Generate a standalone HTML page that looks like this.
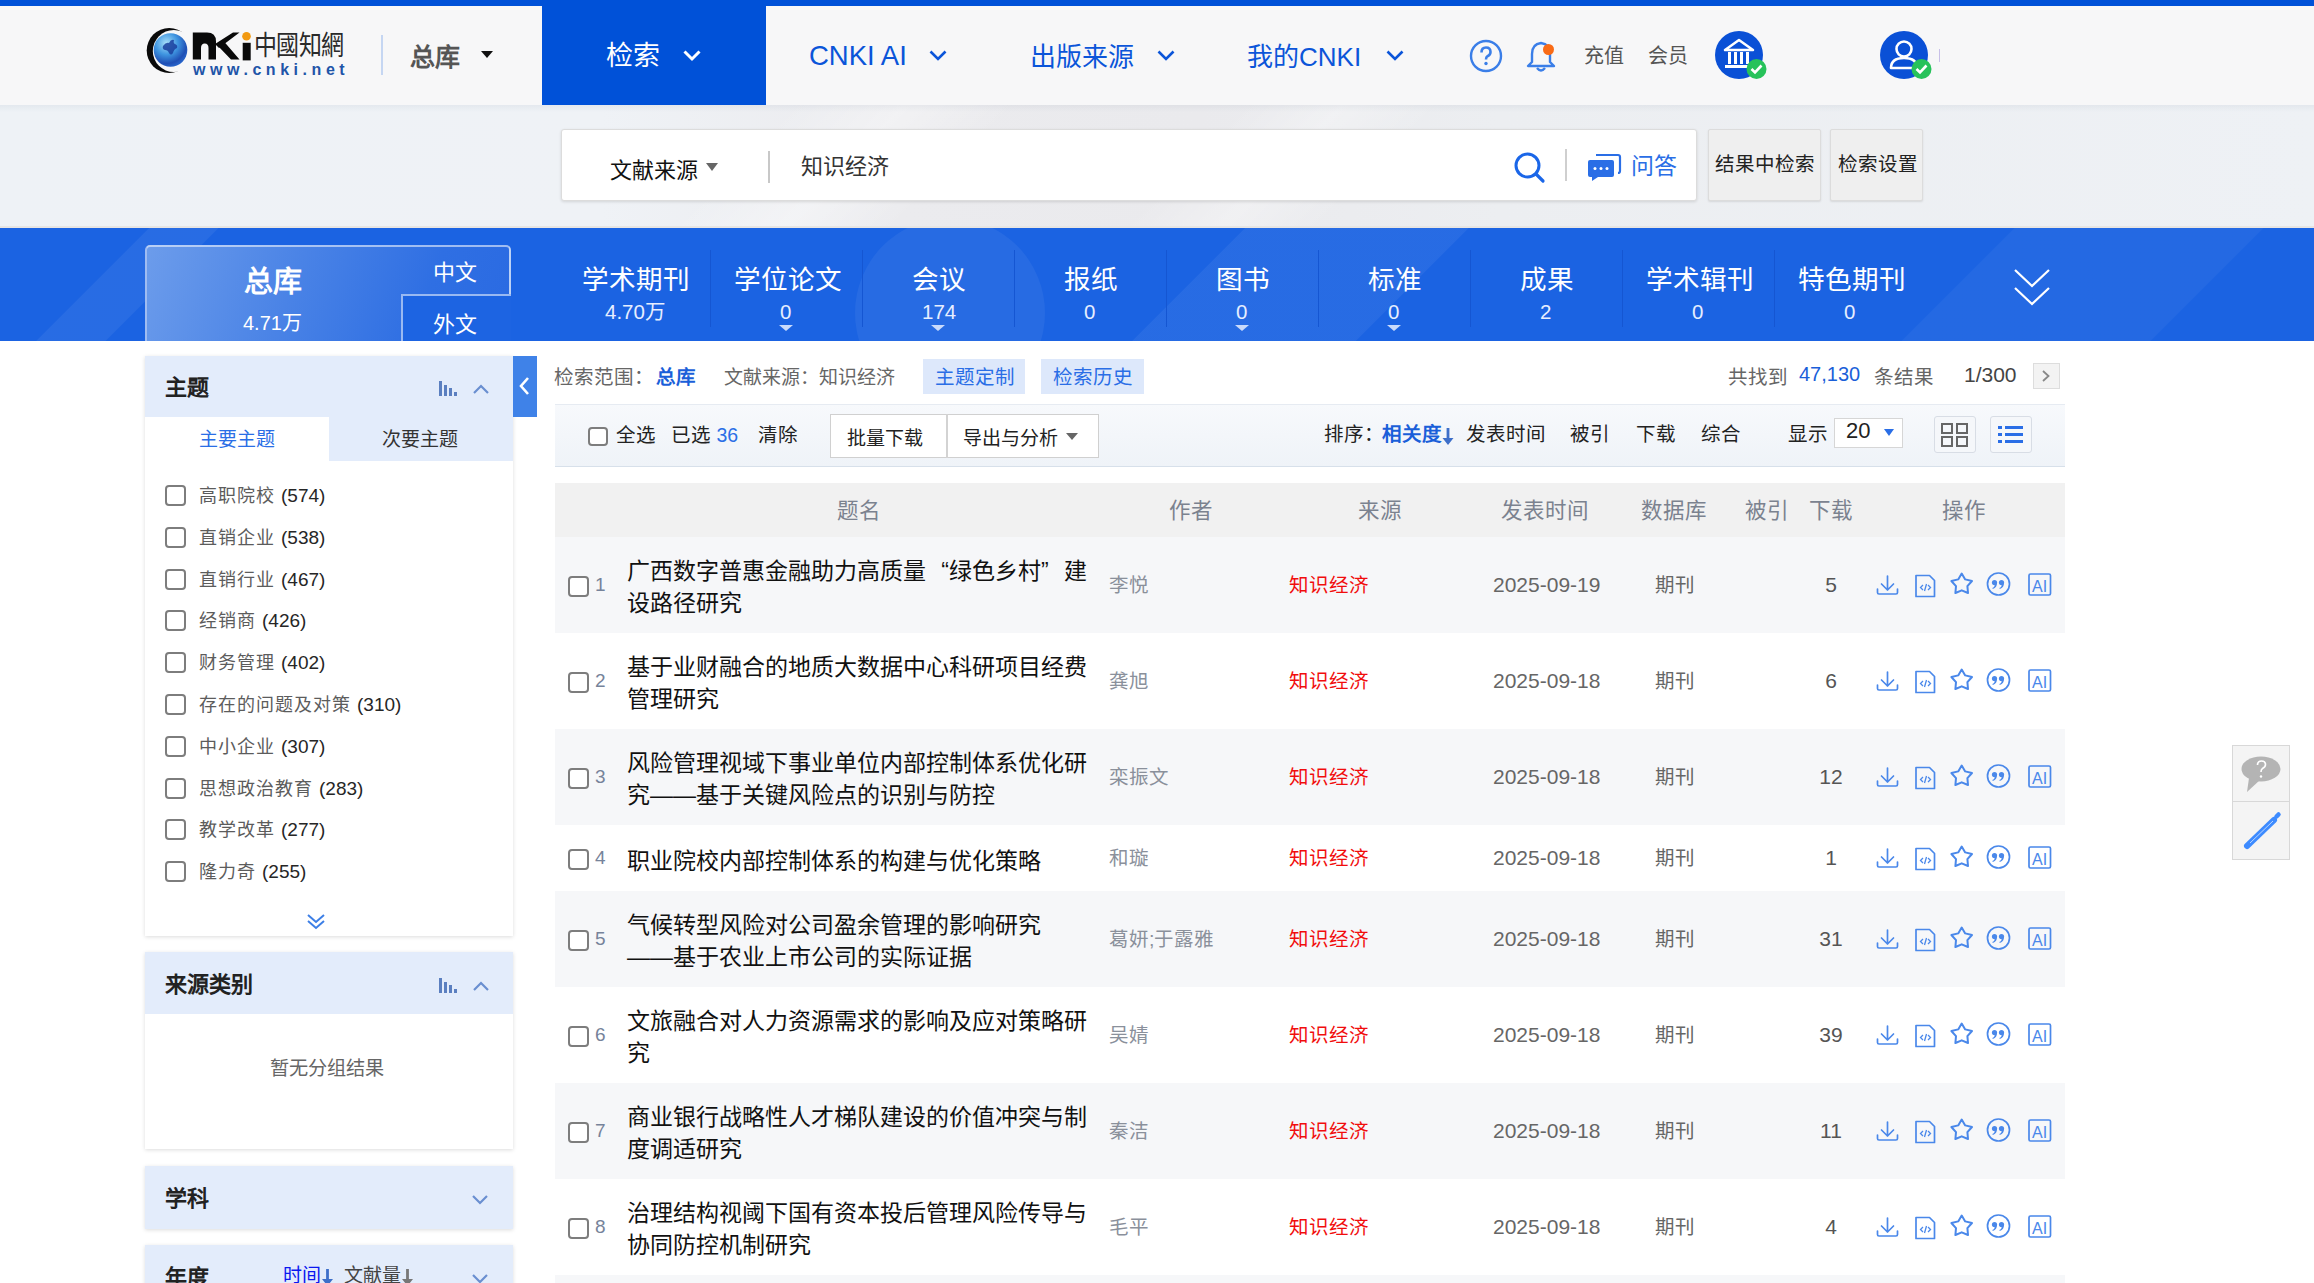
<!DOCTYPE html>
<html lang="zh-CN">
<head>
<meta charset="utf-8">
<style>
*{box-sizing:border-box;margin:0;padding:0}
html,body{width:2314px;height:1283px;overflow:hidden;background:#fff}
body{position:relative;font-family:"Liberation Sans",sans-serif;color:#333}
.a{position:absolute;white-space:nowrap;line-height:1}
svg{position:absolute;overflow:visible}
.topbar{position:absolute;left:0;top:0;width:2314px;height:6px;background:#0051d8}
.header{position:absolute;left:0;top:6px;width:2314px;height:99px;background:#f7f7f8}
.navact{position:absolute;left:542px;top:6px;width:224px;height:99px;background:#0051d8}
.nav{color:#0b55d9;font-size:26px}
.srch{position:absolute;left:0;top:105px;width:2314px;height:123px;background:linear-gradient(rgba(60,80,110,.06),rgba(60,80,110,0) 7px),linear-gradient(135deg,rgba(255,255,255,0) 560px,rgba(255,255,255,.35) 640px,rgba(255,255,255,0) 720px,rgba(255,255,255,0) 880px,rgba(255,255,255,.3) 950px,rgba(255,255,255,0) 1020px),linear-gradient(90deg,#eef2f6 0px,#eff2f6 600px,#ebebee 900px,#eaeaed 1200px,#eceef1 1500px,#eef1f5 2314px)}
.sbox{position:absolute;left:561px;top:129px;width:1136px;height:72px;background:#fff;border:1px solid #dcdcdc;border-radius:3px;box-shadow:0 1px 3px rgba(0,0,0,.12)}
.sbtn{position:absolute;top:129px;height:72px;background:#efefef;border:1px solid #dcdcdc;border-radius:2px;box-shadow:0 1px 2px rgba(0,0,0,.1)}
.band{position:absolute;left:0;top:228px;width:2314px;height:113px;background:#1b63e2;overflow:hidden}
.bt{color:#fff;font-size:26.6px}
.bn{color:#e6eeff;font-size:20.5px}
.bdiv{position:absolute;top:250px;width:1px;height:77px;background:#1556d2}
.btri{position:absolute;top:325px;width:0;height:0;border-left:7px solid transparent;border-right:7px solid transparent;border-top:6px solid #c9dafb}

.panel{position:absolute;left:145px;width:368px;background:#fff;box-shadow:0 1px 4px rgba(0,0,0,.14)}
.phd{position:absolute;left:145px;width:368px;background:#e3ecfb}
.pht{font-size:22px;font-weight:bold;color:#222}
.cb{position:absolute;width:21px;height:21px;border:2px solid #7d7d7d;border-radius:4px;background:#fff}
.li{font-size:18px;color:#5c5c5c;letter-spacing:1px}
.cnt{color:#262626;letter-spacing:0;font-size:19px}
.row{position:absolute;left:555px;width:1510px}
.rcb{width:21px;height:21px}
.rn{font-size:19px;color:#76839a}
.ttl{position:absolute;left:627px;font-size:23px;line-height:31.5px;color:#111;white-space:nowrap}
.oq{display:inline-block;width:23px;text-align:right}
.cq{display:inline-block;width:23px;text-align:left}
.au{font-size:19.5px;color:#8a909b}
.au2{font-size:19.5px;color:#666}
.src{font-size:19.5px;color:#f10d0d}
.dt{font-size:21px;color:#666}
.dl{font-size:21px;color:#555}
.th{font-size:21.5px;color:#7b828f}
.g6{color:#666}
</style>
</head>
<body>
<div class="topbar"></div>
<div class="header"></div>
<div class="navact"></div>
<!-- logo -->
<svg style="left:140px;top:20px" width="220" height="65" viewBox="0 0 220 65">
  <defs>
    <radialGradient id="gl" cx="0.38" cy="0.3" r="0.75">
      <stop offset="0" stop-color="#a9e0fa"/><stop offset="0.45" stop-color="#3f95e0"/><stop offset="0.8" stop-color="#1f4fb5"/><stop offset="1" stop-color="#2a6ad0"/>
    </radialGradient>
    <mask id="cm"><rect x="0" y="0" width="80" height="65" fill="#fff"/><circle cx="33.8" cy="31" r="21" fill="#000"/></mask>
  </defs>
  <circle cx="29.2" cy="30.5" r="22.5" fill="#0a0a0a" mask="url(#cm)"/>
  <circle cx="30.5" cy="30" r="16.8" fill="url(#gl)"/>
  <path d="M23 26 q3 -4 6 -3 q2 -4 5 -3 q-1 3 1 4 q3 1 2 4 q-3 1 -4 5 q-2 3 -4 0 q-1 -3 -4 -3 q-3 -1 -2 -4z" fill="#1a3f9e" opacity=".85"/>
  <path d="M52.8 39.4 V12.4 H67 q9 0 9 9 V39.4 H68.5 V28 q0 -4.5 -3.75 -4.5 q-3.75 0 -3.75 4.5 V39.4z" fill="#0a0a0a"/>
  <path d="M75 24 L93 12.4 H99.5 L79 28z M78 26 L84 21.5 L99.5 39.4 H91z" fill="#0a0a0a"/>
  <rect x="102.7" y="22.8" width="8" height="17.6" fill="#0a0a0a"/>
  <circle cx="106.5" cy="16.2" r="4.3" fill="#f29a12"/>
  <text x="114" y="35" font-size="23" fill="#2a2a2a" font-family="Liberation Serif,serif" transform="translate(0,-6) scale(1,1.17)" letter-spacing="-0.5">中國知網</text>
  <text x="53" y="54.7" font-size="16" font-weight="bold" fill="#1f55a8" font-family="Liberation Sans,sans-serif" letter-spacing="4.55">www.cnki.net</text>
</svg>
<div style="position:absolute;left:381px;top:35px;width:2px;height:40px;background:#c5d6f2"></div>
<div class="a" style="left:410px;top:45px;font-size:25px;color:#555;font-weight:bold">总库</div>
<div style="position:absolute;left:481px;top:51px;border-left:6px solid transparent;border-right:6px solid transparent;border-top:7px solid #111"></div>
<div class="a" style="left:606px;top:43px;font-size:27px;color:#fff">检索</div>
<svg style="left:683px;top:50px" width="18" height="11" viewBox="0 0 18 11"><path d="M1.5 1.5 L9 9 L16.5 1.5" fill="none" stroke="#fff" stroke-width="3"/></svg>
<div class="a nav" style="left:809px;top:41.5px;font-size:27.5px">CNKI AI</div>
<svg style="left:929px;top:50px" width="18" height="11" viewBox="0 0 18 11"><path d="M1.5 1.5 L9 9 L16.5 1.5" fill="none" stroke="#0b55d9" stroke-width="2.6"/></svg>
<div class="a nav" style="left:1030px;top:44px">出版来源</div>
<svg style="left:1157px;top:50px" width="18" height="11" viewBox="0 0 18 11"><path d="M1.5 1.5 L9 9 L16.5 1.5" fill="none" stroke="#0b55d9" stroke-width="2.6"/></svg>
<div class="a nav" style="left:1247px;top:44px">我的CNKI</div>
<svg style="left:1386px;top:50px" width="18" height="11" viewBox="0 0 18 11"><path d="M1.5 1.5 L9 9 L16.5 1.5" fill="none" stroke="#0b55d9" stroke-width="2.6"/></svg>
<!-- help -->
<svg style="left:1469px;top:39px" width="34" height="34" viewBox="0 0 34 34"><circle cx="17" cy="17" r="15" fill="none" stroke="#3a7ee8" stroke-width="2.4"/><path d="M12.5 13.5 q0 -5 4.5 -5 q4.5 0 4.5 4.5 q0 3 -3 4.2 q-1.5 .8 -1.5 3.3" fill="none" stroke="#3a7ee8" stroke-width="2.6"/><circle cx="17" cy="24.5" r="1.7" fill="#3a7ee8"/></svg>
<!-- bell -->
<svg style="left:1525px;top:39px" width="34" height="34" viewBox="0 0 34 34"><path d="M16 4 q-9 1 -9 11 v8 l-4 4 h26 l-4 -4 v-8 q0 -10 -9 -11z" fill="none" stroke="#3a7ee8" stroke-width="2.4" stroke-linejoin="round"/><path d="M12 29 q4 5 8 0" fill="none" stroke="#3a7ee8" stroke-width="2.4"/><circle cx="23.5" cy="10.5" r="5.5" fill="#f96b16"/></svg>
<div class="a" style="left:1584px;top:46px;font-size:20px;color:#555">充值</div>
<div class="a" style="left:1648px;top:46px;font-size:20px;color:#555">会员</div>
<!-- institution avatar -->
<svg style="left:1715px;top:31px" width="54" height="50" viewBox="0 0 54 50"><circle cx="24" cy="24" r="24" fill="#0a50d6"/><path d="M24 9 L10 19 h28z" fill="none" stroke="#fff" stroke-width="2.5" stroke-linejoin="round"/><rect x="13" y="21" width="3" height="12" fill="#fff"/><rect x="19" y="21" width="3" height="12" fill="#fff"/><rect x="25" y="21" width="3" height="12" fill="#fff"/><rect x="31" y="21" width="3" height="12" fill="#fff"/><rect x="10" y="34" width="28" height="3" fill="#fff"/><circle cx="41.5" cy="38" r="10" fill="#27c25a"/><path d="M36.5 38 l3.5 3.5 l6.5 -7" fill="none" stroke="#fff" stroke-width="2.6"/></svg>
<!-- user avatar -->
<svg style="left:1880px;top:31px" width="54" height="50" viewBox="0 0 54 50"><circle cx="24" cy="24" r="24" fill="#0a50d6"/><circle cx="24" cy="18" r="7.5" fill="none" stroke="#fff" stroke-width="2.6"/><path d="M11 37 q0 -10 13 -10 q13 0 13 10z" fill="none" stroke="#fff" stroke-width="2.6" stroke-linejoin="round"/><circle cx="41.5" cy="38" r="10" fill="#27c25a"/><path d="M36.5 38 l3.5 3.5 l6.5 -7" fill="none" stroke="#fff" stroke-width="2.6"/></svg>
<div style="position:absolute;left:1939px;top:49px;width:1px;height:13px;background:#c8c0e8"></div>

<div class="srch"></div>
<div class="sbox"></div>
<div class="a" style="left:610px;top:160px;font-size:22px;color:#111">文献来源</div>
<div style="position:absolute;left:706px;top:163px;border-left:6.5px solid transparent;border-right:6.5px solid transparent;border-top:8px solid #666"></div>
<div style="position:absolute;left:768px;top:151px;width:2px;height:32px;background:#c8c8c8"></div>
<div class="a" style="left:801px;top:156px;font-size:22px;color:#333">知识经济</div>
<svg style="left:1514px;top:152px" width="32" height="32" viewBox="0 0 32 32"><circle cx="13.5" cy="13.5" r="11.5" fill="none" stroke="#1a66e8" stroke-width="3"/><path d="M22 22 L29 29" stroke="#1a66e8" stroke-width="3.2" stroke-linecap="round"/></svg>
<div style="position:absolute;left:1565px;top:149px;width:2px;height:32px;background:#cfcfcf"></div>
<svg style="left:1587px;top:151px" width="34" height="30" viewBox="0 0 34 30"><path d="M9 4 h22 q2 0 2 2 v14 q0 2 -2 2" fill="none" stroke="#2a6ee6" stroke-width="2.2"/><rect x="1" y="9" width="26" height="17" rx="2" fill="#2a6ee6"/><path d="M5 26 l0 4 l6 -4z" fill="#2a6ee6"/><circle cx="8" cy="17.5" r="1.5" fill="#fff"/><circle cx="14" cy="17.5" r="1.5" fill="#fff"/><circle cx="20" cy="17.5" r="1.5" fill="#fff"/></svg>
<div class="a" style="left:1631px;top:155px;font-size:23px;color:#2a6ee6">问答</div>
<div class="sbtn" style="left:1708px;width:113px"></div>
<div class="a" style="left:1715px;top:155px;font-size:19.5px;color:#222">结果中检索</div>
<div class="sbtn" style="left:1830px;width:93px"></div>
<div class="a" style="left:1838px;top:155px;font-size:19.5px;color:#222">检索设置</div>

<div style="position:absolute;left:0;top:226px;width:2314px;height:2px;background:#e7e5e3"></div>
<div class="band">
  <div style="position:absolute;left:0;top:0;width:2314px;height:113px;background:linear-gradient(135deg,rgba(255,255,255,0) 0px,rgba(255,255,255,0) 105px,rgba(255,255,255,.06) 106px,rgba(255,255,255,.06) 154px,rgba(255,255,255,0) 155px,rgba(255,255,255,0) 880px,rgba(255,255,255,.055) 881px,rgba(255,255,255,.055) 1038px,rgba(255,255,255,0) 1039px,rgba(255,255,255,0) 1424px,rgba(255,255,255,.04) 1425px,rgba(255,255,255,.04) 1600px,rgba(255,255,255,0) 1601px)"></div>
  <div style="position:absolute;left:855px;top:-10px;width:190px;height:190px;border-radius:50%;background:rgba(255,255,255,.055)"></div>
</div>
<!-- zongku card -->
<div style="position:absolute;left:145px;top:245px;width:366px;height:96px;border:2px solid rgba(255,255,255,.55);border-bottom:none;border-radius:5px 5px 0 0;background:linear-gradient(110deg,#6c9ceb 0%,#4a83e6 40%,#2f6fe3 75%,#2a6ae2 100%)"></div>
<div style="position:absolute;left:401px;top:294px;width:110px;height:47px;background:#1d64e2;border-left:2px solid rgba(255,255,255,.55);border-top:2px solid rgba(255,255,255,.55)"></div>
<div class="a" style="left:244px;top:268px;font-size:29px;color:#fff;font-weight:bold">总库</div>
<div class="a" style="left:243px;top:312.5px;font-size:20px;color:#fff">4.71万</div>
<div class="a" style="left:433px;top:262px;font-size:22px;color:#fff">中文</div>
<div class="a" style="left:433px;top:314px;font-size:22px;color:#fff">外文</div>

<div class="a bt" style="left:582px;top:266.5px">学术期刊</div><div class="a bn" style="left:605px;top:302px">4.70万</div>
<div class="bdiv" style="left:710px"></div>
<div class="a bt" style="left:734px;top:266.5px">学位论文</div><div class="a bn" style="left:780px;top:302px">0</div><div class="btri" style="left:779px"></div>
<div class="bdiv" style="left:862px"></div>
<div class="a bt" style="left:912px;top:266.5px">会议</div><div class="a bn" style="left:922px;top:302px">174</div><div class="btri" style="left:931px"></div>
<div class="bdiv" style="left:1014px"></div>
<div class="a bt" style="left:1064px;top:266.5px">报纸</div><div class="a bn" style="left:1084px;top:302px">0</div>
<div class="bdiv" style="left:1166px"></div>
<div class="a bt" style="left:1216px;top:266.5px">图书</div><div class="a bn" style="left:1236px;top:302px">0</div><div class="btri" style="left:1235px"></div>
<div class="bdiv" style="left:1318px"></div>
<div class="a bt" style="left:1368px;top:266.5px">标准</div><div class="a bn" style="left:1388px;top:302px">0</div><div class="btri" style="left:1387px"></div>
<div class="bdiv" style="left:1470px"></div>
<div class="a bt" style="left:1520px;top:266.5px">成果</div><div class="a bn" style="left:1540px;top:302px">2</div>
<div class="bdiv" style="left:1622px"></div>
<div class="a bt" style="left:1646px;top:266.5px">学术辑刊</div><div class="a bn" style="left:1692px;top:302px">0</div>
<div class="bdiv" style="left:1774px"></div>
<div class="a bt" style="left:1798px;top:266.5px">特色期刊</div><div class="a bn" style="left:1844px;top:302px">0</div>
<svg style="left:2013px;top:267px" width="38" height="40" viewBox="0 0 38 40"><path d="M2 3 L19 19 L36 3 M2 21 L19 37 L36 21" fill="none" stroke="#fff" stroke-width="2.2"/></svg>



<!-- sidebar: theme panel -->
<div class="panel" style="top:356px;height:580px"></div>
<div class="phd" style="top:356px;height:61px"></div>
<div class="a pht" style="left:165px;top:377px">主题</div>
<svg style="left:438px;top:380px" width="20" height="17" viewBox="0 0 20 17"><g fill="#5b7fc0"><rect x="1" y="1" width="3" height="15"/><rect x="6" y="5" width="3" height="11"/><rect x="11" y="8" width="3" height="8"/><rect x="16" y="12" width="3" height="4"/></g></svg>
<svg style="left:472px;top:382px" width="18" height="13" viewBox="0 0 18 13"><path d="M2 11 L9 4 L16 11" fill="none" stroke="#6a8fd0" stroke-width="2.2"/></svg>
<div style="position:absolute;left:513px;top:356px;width:24px;height:61px;background:#3f82e8"></div>
<svg style="left:517px;top:375px" width="16" height="22" viewBox="0 0 16 22"><path d="M11 3 L4 11 L11 19" fill="none" stroke="#fff" stroke-width="2.6"/></svg>
<div style="position:absolute;left:329px;top:417px;width:184px;height:44px;background:#e3ecfb"></div>
<div class="a" style="left:199px;top:430px;font-size:19px;color:#2a6ee6">主要主题</div>
<div class="a" style="left:382px;top:430px;font-size:19px;color:#333">次要主题</div>
<div class="cb" style="left:165px;top:485px"></div><div class="a li" style="left:199px;top:486px">高职院校 <span class="cnt">(574)</span></div>
<div class="cb" style="left:165px;top:527px"></div><div class="a li" style="left:199px;top:528px">直销企业 <span class="cnt">(538)</span></div>
<div class="cb" style="left:165px;top:569px"></div><div class="a li" style="left:199px;top:570px">直销行业 <span class="cnt">(467)</span></div>
<div class="cb" style="left:165px;top:610px"></div><div class="a li" style="left:199px;top:611px">经销商 <span class="cnt">(426)</span></div>
<div class="cb" style="left:165px;top:652px"></div><div class="a li" style="left:199px;top:653px">财务管理 <span class="cnt">(402)</span></div>
<div class="cb" style="left:165px;top:694px"></div><div class="a li" style="left:199px;top:695px">存在的问题及对策 <span class="cnt">(310)</span></div>
<div class="cb" style="left:165px;top:736px"></div><div class="a li" style="left:199px;top:737px">中小企业 <span class="cnt">(307)</span></div>
<div class="cb" style="left:165px;top:778px"></div><div class="a li" style="left:199px;top:779px">思想政治教育 <span class="cnt">(283)</span></div>
<div class="cb" style="left:165px;top:819px"></div><div class="a li" style="left:199px;top:820px">教学改革 <span class="cnt">(277)</span></div>
<div class="cb" style="left:165px;top:861px"></div><div class="a li" style="left:199px;top:862px">隆力奇 <span class="cnt">(255)</span></div>
<svg style="left:306px;top:913px" width="20" height="17" viewBox="0 0 20 17"><path d="M2 2 L10 9 L18 2 M2 8 L10 15 L18 8" fill="none" stroke="#3d7fe6" stroke-width="2"/></svg>

<!-- source category panel -->
<div class="panel" style="top:952px;height:197px"></div>
<div class="phd" style="top:952px;height:62px"></div>
<div class="a pht" style="left:165px;top:974px">来源类别</div>
<svg style="left:438px;top:977px" width="20" height="17" viewBox="0 0 20 17"><g fill="#5b7fc0"><rect x="1" y="1" width="3" height="15"/><rect x="6" y="5" width="3" height="11"/><rect x="11" y="8" width="3" height="8"/><rect x="16" y="12" width="3" height="4"/></g></svg>
<svg style="left:472px;top:979px" width="18" height="13" viewBox="0 0 18 13"><path d="M2 11 L9 4 L16 11" fill="none" stroke="#6a8fd0" stroke-width="2.2"/></svg>
<div class="a" style="left:270px;top:1058.5px;font-size:19.2px;color:#666">暂无分组结果</div>

<!-- subject -->
<div class="phd" style="top:1166px;height:63px;box-shadow:0 1px 4px rgba(0,0,0,.14)"></div>
<div class="a pht" style="left:165px;top:1188px">学科</div>
<svg style="left:471px;top:1194px" width="18" height="13" viewBox="0 0 18 13"><path d="M2 2 L9 9 L16 2" fill="none" stroke="#6a8fd0" stroke-width="2.2"/></svg>
<!-- year -->
<div class="phd" style="top:1245px;height:63px;box-shadow:0 1px 4px rgba(0,0,0,.14)"></div>
<div class="a pht" style="left:165px;top:1267px">年度</div>
<div class="a" style="left:283px;top:1266px;font-size:19px;color:#0a17f0">时间</div><svg style="left:321px;top:1268px" width="13" height="19" viewBox="0 0 13 19"><path d="M5.1 1 H7.9 V11 H12 L6.5 18 L1 11 H5.1z" fill="#3d6fc9"/></svg>
<div class="a" style="left:344px;top:1266px;font-size:19px;color:#444">文献量</div><svg style="left:401px;top:1268px" width="13" height="19" viewBox="0 0 13 19"><path d="M5.1 1 H7.9 V11 H12 L6.5 18 L1 11 H5.1z" fill="#777"/></svg>
<svg style="left:471px;top:1273px" width="18" height="13" viewBox="0 0 18 13"><path d="M2 2 L9 9 L16 2" fill="none" stroke="#6a8fd0" stroke-width="2.2"/></svg>

<!-- main: scope line -->
<div class="a g6" style="left:554px;top:367.5px;font-size:19.5px">检索范围：</div>
<div class="a" style="left:656px;top:367.5px;font-size:19.5px;color:#1a5fd9;font-weight:bold">总库</div>
<div class="a g6" style="left:724px;top:368px;font-size:19px">文献来源：知识经济</div>
<div style="position:absolute;left:923px;top:359px;width:102px;height:35px;background:#dde8fb"></div>
<div class="a" style="left:935px;top:367.5px;font-size:19.5px;color:#2a6ee6">主题定制</div>
<div style="position:absolute;left:1041px;top:359px;width:103px;height:35px;background:#dde8fb"></div>
<div class="a" style="left:1053px;top:367.5px;font-size:19.5px;color:#2a6ee6">检索历史</div>
<div class="a g6" style="left:1728px;top:367.5px;font-size:19.5px">共找到</div>
<div class="a" style="left:1799px;top:364px;font-size:20px;color:#1a5fd9">47,130</div>
<div class="a g6" style="left:1874px;top:367.5px;font-size:19.5px">条结果</div>
<div class="a" style="left:1964px;top:363.5px;font-size:21px;color:#444">1/300</div>
<div style="position:absolute;left:2033px;top:363px;width:27px;height:26px;background:#f3f3f3;border:1px solid #ddd"></div>
<svg style="left:2040px;top:369px" width="12" height="14" viewBox="0 0 12 14"><path d="M3 2 L8.5 7 L3 12" fill="none" stroke="#888" stroke-width="1.8"/></svg>

<!-- toolbar -->
<div style="position:absolute;left:555px;top:404px;width:1510px;height:63px;background:linear-gradient(#f7f9fc,#eff3f8);border-top:1px solid #e6ebf2;border-bottom:1px solid #d7e0ea"></div>
<div class="cb" style="left:588px;top:427px;width:20px;height:19px"></div>
<div class="a" style="left:616px;top:426px;font-size:19.5px;color:#222">全选</div>
<div class="a" style="left:671px;top:426px;font-size:19.5px;color:#222">已选 <span style="color:#2a6ee6">36</span></div>
<div class="a" style="left:758px;top:426px;font-size:19.5px;color:#222">清除</div>
<div style="position:absolute;left:830px;top:414px;width:269px;height:44px;background:#fff;border:1px solid #d0d0d0"></div>
<div style="position:absolute;left:946px;top:414px;width:2px;height:44px;background:#d3d3d3"></div>
<div class="a" style="left:847px;top:428.5px;font-size:19px;color:#222">批量下载</div>
<div class="a" style="left:963px;top:428.5px;font-size:19px;color:#222">导出与分析</div>
<div style="position:absolute;left:1066px;top:433px;border-left:6px solid transparent;border-right:6px solid transparent;border-top:7px solid #666"></div>
<div class="a" style="left:1324px;top:425px;font-size:19.5px;color:#222">排序：</div>
<div class="a" style="left:1382px;top:425px;font-size:19.5px;color:#1a5fd9;font-weight:bold">相关度</div>
<svg style="left:1441px;top:427px" width="14" height="19" viewBox="0 0 14 19"><path d="M5.6 1 H8.4 V11 H12.5 L7 18 L1.5 11 H5.6z" fill="#3d6fc9"/></svg>
<div class="a" style="left:1466px;top:425px;font-size:19.5px;color:#222">发表时间</div>
<div class="a" style="left:1570px;top:425px;font-size:19.5px;color:#222">被引</div>
<div class="a" style="left:1636px;top:425px;font-size:19.5px;color:#222">下载</div>
<div class="a" style="left:1701px;top:425px;font-size:19.5px;color:#222">综合</div>
<div class="a" style="left:1788px;top:425px;font-size:19.5px;color:#222">显示</div>
<div style="position:absolute;left:1834px;top:418px;width:69px;height:30px;background:#fff;border:1px solid #d6d6d6"></div>
<div class="a" style="left:1846px;top:419.5px;font-size:22px;color:#222">20</div>
<div style="position:absolute;left:1884px;top:429px;border-left:5px solid transparent;border-right:5px solid transparent;border-top:7px solid #2a6ee6"></div>
<div style="position:absolute;left:1934px;top:416px;width:42px;height:37px;background:#f5f7fa;border:1px solid #d8dde5;border-radius:3px"></div>
<svg style="left:1940px;top:422px" width="30" height="26" viewBox="0 0 30 26"><g fill="none" stroke="#666" stroke-width="2"><rect x="2" y="2" width="10" height="9"/><rect x="17" y="2" width="10" height="9"/><rect x="2" y="15" width="10" height="9"/><rect x="17" y="15" width="10" height="9"/></g></svg>
<div style="position:absolute;left:1990px;top:416px;width:42px;height:37px;background:#f5f7fa;border:1px solid #d8dde5;border-radius:3px"></div>
<svg style="left:1996px;top:423px" width="30" height="24" viewBox="0 0 30 24"><g fill="#2a6ee6"><rect x="2" y="3" width="4" height="3"/><rect x="9" y="3" width="18" height="3"/><rect x="2" y="10" width="4" height="3"/><rect x="9" y="10" width="18" height="3"/><rect x="2" y="17" width="4" height="3"/><rect x="9" y="17" width="18" height="3"/></g></svg>

<!-- table header -->
<div style="position:absolute;left:555px;top:483px;width:1510px;height:54px;background:#f1f1f1"></div>
<div class="a th" style="left:837px;top:501px">题名</div>
<div class="a th" style="left:1169px;top:501px">作者</div>
<div class="a th" style="left:1358px;top:501px">来源</div>
<div class="a th" style="left:1501px;top:501px">发表时间</div>
<div class="a th" style="left:1641px;top:501px">数据库</div>
<div class="a th" style="left:1745px;top:501px">被引</div>
<div class="a th" style="left:1809px;top:501px">下载</div>
<div class="a th" style="left:1942px;top:501px">操作</div>
<!--ROWS-->
<div class="row" style="top:537px;height:96px;background:#f6f7f9"></div>
<div class="cb rcb" style="left:568px;top:576px"></div><div class="a rn" style="left:595px;top:575px">1</div>
<div class="ttl" style="top:556.0px">广西数字普惠金融助力高质量<span class="oq">“</span>绿色乡村<span class="cq">”</span>建<br>设路径研究</div>
<div class="a au" style="left:1109px;top:576px">李悦</div>
<div class="a src" style="left:1289px;top:576px">知识经济</div>
<div class="a dt" style="left:1493px;top:574px">2025-09-19</div>
<div class="a au2" style="left:1655px;top:576px">期刊</div>
<div class="a dl" style="left:1781px;width:100px;text-align:center;top:574px">5</div>
<svg class="ops" style="left:1874px;top:571px" width="180" height="28">
 <g fill="none" stroke="#4a88ea" stroke-width="1.7">
  <path d="M13.5 5 V19 M7.5 13 L13.5 19 L19.5 13" stroke-linecap="round" stroke-linejoin="round"/>
  <path d="M3.5 18 V21.5 q0 1.5 1.5 1.5 H22 q1.5 0 1.5 -1.5 V18" stroke-linecap="round"/>
  <path d="M42 4.5 H55.5 L60.5 9.5 V25.5 H42z" stroke-linejoin="round"/>
  <path d="M49 14 L46.5 16.5 L49 19 M54 14 L56.5 16.5 L54 19 M52.5 13 L50.5 20" stroke-width="1.3"/>
  <path d="M87.7 2.5 L91.2 8.4 L98.0 10.0 L93.4 15.2 L94.0 22.0 L87.7 19.3 L81.4 22.0 L82.0 15.2 L77.4 10.0 L84.2 8.4z" stroke-linejoin="round" stroke-width="2"/>
  <circle cx="124.5" cy="13" r="11"/>
 </g>
 <g fill="#4a88ea">
  <circle cx="120.5" cy="11.5" r="2.6"/><path d="M122.8 11.5 q0.5 5 -4 6.5 l-0.4 -1 q2.5 -1.2 2.4 -3.5z"/>
  <circle cx="127.5" cy="11.5" r="2.6"/><path d="M129.8 11.5 q0.5 5 -4 6.5 l-0.4 -1 q2.5 -1.2 2.4 -3.5z"/>
 </g>
 <rect x="155" y="3" width="21.5" height="21" rx="1.5" fill="none" stroke="#4a88ea" stroke-width="1.7"/>
 <text x="158" y="20.5" font-size="16" fill="#4a88ea" font-family="Liberation Sans,sans-serif">AI</text>
</svg>
<div class="row" style="top:633px;height:96px;background:#fff"></div>
<div class="cb rcb" style="left:568px;top:672px"></div><div class="a rn" style="left:595px;top:671px">2</div>
<div class="ttl" style="top:652.0px">基于业财融合的地质大数据中心科研项目经费<br>管理研究</div>
<div class="a au" style="left:1109px;top:672px">龚旭</div>
<div class="a src" style="left:1289px;top:672px">知识经济</div>
<div class="a dt" style="left:1493px;top:670px">2025-09-18</div>
<div class="a au2" style="left:1655px;top:672px">期刊</div>
<div class="a dl" style="left:1781px;width:100px;text-align:center;top:670px">6</div>
<svg class="ops" style="left:1874px;top:667px" width="180" height="28">
 <g fill="none" stroke="#4a88ea" stroke-width="1.7">
  <path d="M13.5 5 V19 M7.5 13 L13.5 19 L19.5 13" stroke-linecap="round" stroke-linejoin="round"/>
  <path d="M3.5 18 V21.5 q0 1.5 1.5 1.5 H22 q1.5 0 1.5 -1.5 V18" stroke-linecap="round"/>
  <path d="M42 4.5 H55.5 L60.5 9.5 V25.5 H42z" stroke-linejoin="round"/>
  <path d="M49 14 L46.5 16.5 L49 19 M54 14 L56.5 16.5 L54 19 M52.5 13 L50.5 20" stroke-width="1.3"/>
  <path d="M87.7 2.5 L91.2 8.4 L98.0 10.0 L93.4 15.2 L94.0 22.0 L87.7 19.3 L81.4 22.0 L82.0 15.2 L77.4 10.0 L84.2 8.4z" stroke-linejoin="round" stroke-width="2"/>
  <circle cx="124.5" cy="13" r="11"/>
 </g>
 <g fill="#4a88ea">
  <circle cx="120.5" cy="11.5" r="2.6"/><path d="M122.8 11.5 q0.5 5 -4 6.5 l-0.4 -1 q2.5 -1.2 2.4 -3.5z"/>
  <circle cx="127.5" cy="11.5" r="2.6"/><path d="M129.8 11.5 q0.5 5 -4 6.5 l-0.4 -1 q2.5 -1.2 2.4 -3.5z"/>
 </g>
 <rect x="155" y="3" width="21.5" height="21" rx="1.5" fill="none" stroke="#4a88ea" stroke-width="1.7"/>
 <text x="158" y="20.5" font-size="16" fill="#4a88ea" font-family="Liberation Sans,sans-serif">AI</text>
</svg>
<div class="row" style="top:729px;height:96px;background:#f6f7f9"></div>
<div class="cb rcb" style="left:568px;top:768px"></div><div class="a rn" style="left:595px;top:767px">3</div>
<div class="ttl" style="top:748.0px">风险管理视域下事业单位内部控制体系优化研<br>究——基于关键风险点的识别与防控</div>
<div class="a au" style="left:1109px;top:768px">栾振文</div>
<div class="a src" style="left:1289px;top:768px">知识经济</div>
<div class="a dt" style="left:1493px;top:766px">2025-09-18</div>
<div class="a au2" style="left:1655px;top:768px">期刊</div>
<div class="a dl" style="left:1781px;width:100px;text-align:center;top:766px">12</div>
<svg class="ops" style="left:1874px;top:763px" width="180" height="28">
 <g fill="none" stroke="#4a88ea" stroke-width="1.7">
  <path d="M13.5 5 V19 M7.5 13 L13.5 19 L19.5 13" stroke-linecap="round" stroke-linejoin="round"/>
  <path d="M3.5 18 V21.5 q0 1.5 1.5 1.5 H22 q1.5 0 1.5 -1.5 V18" stroke-linecap="round"/>
  <path d="M42 4.5 H55.5 L60.5 9.5 V25.5 H42z" stroke-linejoin="round"/>
  <path d="M49 14 L46.5 16.5 L49 19 M54 14 L56.5 16.5 L54 19 M52.5 13 L50.5 20" stroke-width="1.3"/>
  <path d="M87.7 2.5 L91.2 8.4 L98.0 10.0 L93.4 15.2 L94.0 22.0 L87.7 19.3 L81.4 22.0 L82.0 15.2 L77.4 10.0 L84.2 8.4z" stroke-linejoin="round" stroke-width="2"/>
  <circle cx="124.5" cy="13" r="11"/>
 </g>
 <g fill="#4a88ea">
  <circle cx="120.5" cy="11.5" r="2.6"/><path d="M122.8 11.5 q0.5 5 -4 6.5 l-0.4 -1 q2.5 -1.2 2.4 -3.5z"/>
  <circle cx="127.5" cy="11.5" r="2.6"/><path d="M129.8 11.5 q0.5 5 -4 6.5 l-0.4 -1 q2.5 -1.2 2.4 -3.5z"/>
 </g>
 <rect x="155" y="3" width="21.5" height="21" rx="1.5" fill="none" stroke="#4a88ea" stroke-width="1.7"/>
 <text x="158" y="20.5" font-size="16" fill="#4a88ea" font-family="Liberation Sans,sans-serif">AI</text>
</svg>
<div class="row" style="top:825px;height:66px;background:#fff"></div>
<div class="cb rcb" style="left:568px;top:849px"></div><div class="a rn" style="left:595px;top:848px">4</div>
<div class="ttl" style="top:846.0px">职业院校内部控制体系的构建与优化策略</div>
<div class="a au" style="left:1109px;top:849px">和璇</div>
<div class="a src" style="left:1289px;top:849px">知识经济</div>
<div class="a dt" style="left:1493px;top:847px">2025-09-18</div>
<div class="a au2" style="left:1655px;top:849px">期刊</div>
<div class="a dl" style="left:1781px;width:100px;text-align:center;top:847px">1</div>
<svg class="ops" style="left:1874px;top:844px" width="180" height="28">
 <g fill="none" stroke="#4a88ea" stroke-width="1.7">
  <path d="M13.5 5 V19 M7.5 13 L13.5 19 L19.5 13" stroke-linecap="round" stroke-linejoin="round"/>
  <path d="M3.5 18 V21.5 q0 1.5 1.5 1.5 H22 q1.5 0 1.5 -1.5 V18" stroke-linecap="round"/>
  <path d="M42 4.5 H55.5 L60.5 9.5 V25.5 H42z" stroke-linejoin="round"/>
  <path d="M49 14 L46.5 16.5 L49 19 M54 14 L56.5 16.5 L54 19 M52.5 13 L50.5 20" stroke-width="1.3"/>
  <path d="M87.7 2.5 L91.2 8.4 L98.0 10.0 L93.4 15.2 L94.0 22.0 L87.7 19.3 L81.4 22.0 L82.0 15.2 L77.4 10.0 L84.2 8.4z" stroke-linejoin="round" stroke-width="2"/>
  <circle cx="124.5" cy="13" r="11"/>
 </g>
 <g fill="#4a88ea">
  <circle cx="120.5" cy="11.5" r="2.6"/><path d="M122.8 11.5 q0.5 5 -4 6.5 l-0.4 -1 q2.5 -1.2 2.4 -3.5z"/>
  <circle cx="127.5" cy="11.5" r="2.6"/><path d="M129.8 11.5 q0.5 5 -4 6.5 l-0.4 -1 q2.5 -1.2 2.4 -3.5z"/>
 </g>
 <rect x="155" y="3" width="21.5" height="21" rx="1.5" fill="none" stroke="#4a88ea" stroke-width="1.7"/>
 <text x="158" y="20.5" font-size="16" fill="#4a88ea" font-family="Liberation Sans,sans-serif">AI</text>
</svg>
<div class="row" style="top:891px;height:96px;background:#f6f7f9"></div>
<div class="cb rcb" style="left:568px;top:930px"></div><div class="a rn" style="left:595px;top:929px">5</div>
<div class="ttl" style="top:910.0px">气候转型风险对公司盈余管理的影响研究<br>——基于农业上市公司的实际证据</div>
<div class="a au" style="left:1109px;top:930px">葛妍;于露雅</div>
<div class="a src" style="left:1289px;top:930px">知识经济</div>
<div class="a dt" style="left:1493px;top:928px">2025-09-18</div>
<div class="a au2" style="left:1655px;top:930px">期刊</div>
<div class="a dl" style="left:1781px;width:100px;text-align:center;top:928px">31</div>
<svg class="ops" style="left:1874px;top:925px" width="180" height="28">
 <g fill="none" stroke="#4a88ea" stroke-width="1.7">
  <path d="M13.5 5 V19 M7.5 13 L13.5 19 L19.5 13" stroke-linecap="round" stroke-linejoin="round"/>
  <path d="M3.5 18 V21.5 q0 1.5 1.5 1.5 H22 q1.5 0 1.5 -1.5 V18" stroke-linecap="round"/>
  <path d="M42 4.5 H55.5 L60.5 9.5 V25.5 H42z" stroke-linejoin="round"/>
  <path d="M49 14 L46.5 16.5 L49 19 M54 14 L56.5 16.5 L54 19 M52.5 13 L50.5 20" stroke-width="1.3"/>
  <path d="M87.7 2.5 L91.2 8.4 L98.0 10.0 L93.4 15.2 L94.0 22.0 L87.7 19.3 L81.4 22.0 L82.0 15.2 L77.4 10.0 L84.2 8.4z" stroke-linejoin="round" stroke-width="2"/>
  <circle cx="124.5" cy="13" r="11"/>
 </g>
 <g fill="#4a88ea">
  <circle cx="120.5" cy="11.5" r="2.6"/><path d="M122.8 11.5 q0.5 5 -4 6.5 l-0.4 -1 q2.5 -1.2 2.4 -3.5z"/>
  <circle cx="127.5" cy="11.5" r="2.6"/><path d="M129.8 11.5 q0.5 5 -4 6.5 l-0.4 -1 q2.5 -1.2 2.4 -3.5z"/>
 </g>
 <rect x="155" y="3" width="21.5" height="21" rx="1.5" fill="none" stroke="#4a88ea" stroke-width="1.7"/>
 <text x="158" y="20.5" font-size="16" fill="#4a88ea" font-family="Liberation Sans,sans-serif">AI</text>
</svg>
<div class="row" style="top:987px;height:96px;background:#fff"></div>
<div class="cb rcb" style="left:568px;top:1026px"></div><div class="a rn" style="left:595px;top:1025px">6</div>
<div class="ttl" style="top:1006.0px">文旅融合对人力资源需求的影响及应对策略研<br>究</div>
<div class="a au" style="left:1109px;top:1026px">吴婧</div>
<div class="a src" style="left:1289px;top:1026px">知识经济</div>
<div class="a dt" style="left:1493px;top:1024px">2025-09-18</div>
<div class="a au2" style="left:1655px;top:1026px">期刊</div>
<div class="a dl" style="left:1781px;width:100px;text-align:center;top:1024px">39</div>
<svg class="ops" style="left:1874px;top:1021px" width="180" height="28">
 <g fill="none" stroke="#4a88ea" stroke-width="1.7">
  <path d="M13.5 5 V19 M7.5 13 L13.5 19 L19.5 13" stroke-linecap="round" stroke-linejoin="round"/>
  <path d="M3.5 18 V21.5 q0 1.5 1.5 1.5 H22 q1.5 0 1.5 -1.5 V18" stroke-linecap="round"/>
  <path d="M42 4.5 H55.5 L60.5 9.5 V25.5 H42z" stroke-linejoin="round"/>
  <path d="M49 14 L46.5 16.5 L49 19 M54 14 L56.5 16.5 L54 19 M52.5 13 L50.5 20" stroke-width="1.3"/>
  <path d="M87.7 2.5 L91.2 8.4 L98.0 10.0 L93.4 15.2 L94.0 22.0 L87.7 19.3 L81.4 22.0 L82.0 15.2 L77.4 10.0 L84.2 8.4z" stroke-linejoin="round" stroke-width="2"/>
  <circle cx="124.5" cy="13" r="11"/>
 </g>
 <g fill="#4a88ea">
  <circle cx="120.5" cy="11.5" r="2.6"/><path d="M122.8 11.5 q0.5 5 -4 6.5 l-0.4 -1 q2.5 -1.2 2.4 -3.5z"/>
  <circle cx="127.5" cy="11.5" r="2.6"/><path d="M129.8 11.5 q0.5 5 -4 6.5 l-0.4 -1 q2.5 -1.2 2.4 -3.5z"/>
 </g>
 <rect x="155" y="3" width="21.5" height="21" rx="1.5" fill="none" stroke="#4a88ea" stroke-width="1.7"/>
 <text x="158" y="20.5" font-size="16" fill="#4a88ea" font-family="Liberation Sans,sans-serif">AI</text>
</svg>
<div class="row" style="top:1083px;height:96px;background:#f6f7f9"></div>
<div class="cb rcb" style="left:568px;top:1122px"></div><div class="a rn" style="left:595px;top:1121px">7</div>
<div class="ttl" style="top:1102.0px">商业银行战略性人才梯队建设的价值冲突与制<br>度调适研究</div>
<div class="a au" style="left:1109px;top:1122px">秦洁</div>
<div class="a src" style="left:1289px;top:1122px">知识经济</div>
<div class="a dt" style="left:1493px;top:1120px">2025-09-18</div>
<div class="a au2" style="left:1655px;top:1122px">期刊</div>
<div class="a dl" style="left:1781px;width:100px;text-align:center;top:1120px">11</div>
<svg class="ops" style="left:1874px;top:1117px" width="180" height="28">
 <g fill="none" stroke="#4a88ea" stroke-width="1.7">
  <path d="M13.5 5 V19 M7.5 13 L13.5 19 L19.5 13" stroke-linecap="round" stroke-linejoin="round"/>
  <path d="M3.5 18 V21.5 q0 1.5 1.5 1.5 H22 q1.5 0 1.5 -1.5 V18" stroke-linecap="round"/>
  <path d="M42 4.5 H55.5 L60.5 9.5 V25.5 H42z" stroke-linejoin="round"/>
  <path d="M49 14 L46.5 16.5 L49 19 M54 14 L56.5 16.5 L54 19 M52.5 13 L50.5 20" stroke-width="1.3"/>
  <path d="M87.7 2.5 L91.2 8.4 L98.0 10.0 L93.4 15.2 L94.0 22.0 L87.7 19.3 L81.4 22.0 L82.0 15.2 L77.4 10.0 L84.2 8.4z" stroke-linejoin="round" stroke-width="2"/>
  <circle cx="124.5" cy="13" r="11"/>
 </g>
 <g fill="#4a88ea">
  <circle cx="120.5" cy="11.5" r="2.6"/><path d="M122.8 11.5 q0.5 5 -4 6.5 l-0.4 -1 q2.5 -1.2 2.4 -3.5z"/>
  <circle cx="127.5" cy="11.5" r="2.6"/><path d="M129.8 11.5 q0.5 5 -4 6.5 l-0.4 -1 q2.5 -1.2 2.4 -3.5z"/>
 </g>
 <rect x="155" y="3" width="21.5" height="21" rx="1.5" fill="none" stroke="#4a88ea" stroke-width="1.7"/>
 <text x="158" y="20.5" font-size="16" fill="#4a88ea" font-family="Liberation Sans,sans-serif">AI</text>
</svg>
<div class="row" style="top:1179px;height:96px;background:#fff"></div>
<div class="cb rcb" style="left:568px;top:1218px"></div><div class="a rn" style="left:595px;top:1217px">8</div>
<div class="ttl" style="top:1198.0px">治理结构视阈下国有资本投后管理风险传导与<br>协同防控机制研究</div>
<div class="a au" style="left:1109px;top:1218px">毛平</div>
<div class="a src" style="left:1289px;top:1218px">知识经济</div>
<div class="a dt" style="left:1493px;top:1216px">2025-09-18</div>
<div class="a au2" style="left:1655px;top:1218px">期刊</div>
<div class="a dl" style="left:1781px;width:100px;text-align:center;top:1216px">4</div>
<svg class="ops" style="left:1874px;top:1213px" width="180" height="28">
 <g fill="none" stroke="#4a88ea" stroke-width="1.7">
  <path d="M13.5 5 V19 M7.5 13 L13.5 19 L19.5 13" stroke-linecap="round" stroke-linejoin="round"/>
  <path d="M3.5 18 V21.5 q0 1.5 1.5 1.5 H22 q1.5 0 1.5 -1.5 V18" stroke-linecap="round"/>
  <path d="M42 4.5 H55.5 L60.5 9.5 V25.5 H42z" stroke-linejoin="round"/>
  <path d="M49 14 L46.5 16.5 L49 19 M54 14 L56.5 16.5 L54 19 M52.5 13 L50.5 20" stroke-width="1.3"/>
  <path d="M87.7 2.5 L91.2 8.4 L98.0 10.0 L93.4 15.2 L94.0 22.0 L87.7 19.3 L81.4 22.0 L82.0 15.2 L77.4 10.0 L84.2 8.4z" stroke-linejoin="round" stroke-width="2"/>
  <circle cx="124.5" cy="13" r="11"/>
 </g>
 <g fill="#4a88ea">
  <circle cx="120.5" cy="11.5" r="2.6"/><path d="M122.8 11.5 q0.5 5 -4 6.5 l-0.4 -1 q2.5 -1.2 2.4 -3.5z"/>
  <circle cx="127.5" cy="11.5" r="2.6"/><path d="M129.8 11.5 q0.5 5 -4 6.5 l-0.4 -1 q2.5 -1.2 2.4 -3.5z"/>
 </g>
 <rect x="155" y="3" width="21.5" height="21" rx="1.5" fill="none" stroke="#4a88ea" stroke-width="1.7"/>
 <text x="158" y="20.5" font-size="16" fill="#4a88ea" font-family="Liberation Sans,sans-serif">AI</text>
</svg>
<div class="row" style="top:1275px;height:96px;background:#f6f7f9"></div>
<!--/ROWS-->

<!-- floating widget -->
<div style="position:absolute;left:2232px;top:745px;width:58px;height:115px;background:#f4f4f4;border:1px solid #d8d8d8"></div>
<div style="position:absolute;left:2233px;top:801px;width:56px;height:1px;background:#d8d8d8"></div>
<svg style="left:2240px;top:756px" width="42" height="38" viewBox="0 0 42 38"><ellipse cx="21" cy="13" rx="19.5" ry="12.5" fill="#b4b4b4"/><path d="M9 22 L7 36 L20 24z" fill="#b4b4b4"/><path d="M17.5 9 q0 -4 4 -4 q4 0 4 3.5 q0 2.5 -3 4 q-1.5 1 -1.5 3.5" fill="none" stroke="#fff" stroke-width="1.6"/><circle cx="21" cy="20.5" r="1.2" fill="#fff"/></svg>
<svg style="left:2241px;top:809px" width="42" height="42" viewBox="0 0 42 42"><path d="M6 37 L33 11" stroke="#3d8bff" stroke-width="6" stroke-linecap="round"/><path d="M35.5 7.5 L37.5 5.5" stroke="#3d8bff" stroke-width="4.5" stroke-linecap="round"/><path d="M9 34 L32 12" stroke="#dbe9ff" stroke-width="0.8"/></svg>
</body>
</html>
